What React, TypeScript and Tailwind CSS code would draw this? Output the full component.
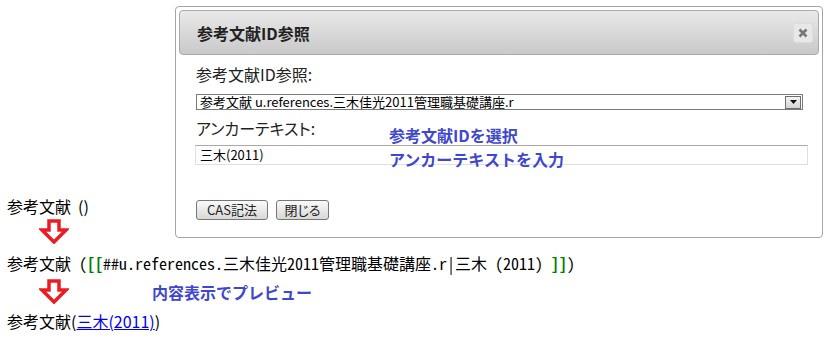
import React from "react";

const sans = "font-['Noto_Sans_CJK_JP',sans-serif]";
const palt = "[font-feature-settings:'palt']";
const mono = "font-['Noto_Sans_Mono_CJK_JP','Liberation_Mono',monospace]";

function DownArrow() {
  return (
    <svg width="30" height="25" viewBox="0 0 30 25" className="block">
      <path
        d="M10 2 H20 V11 H27 L15 23 L3 11 H10 Z"
        fill="#fff"
        stroke="#ed1c24"
        strokeWidth="3.5"
        strokeLinejoin="miter"
      />
    </svg>
  );
}

function ReferenceDialog() {
  return (
    <div className="absolute left-[175px] top-[6px] w-[648px] h-[232px] border border-[#a6a6a6] rounded-[4px] bg-white p-[3px]">
      {/* タイトルバー */}
      <div className="h-[45px] flex items-center justify-between pl-[17px] pr-[5px] border border-[#aaaaaa] rounded-[4px] bg-gradient-to-b from-[#e9e9e9] to-[#c9c9c9]">
        <span className="text-[16px] font-bold text-[#222]">参考文献ID参照</span>
        <button className="w-[20px] h-[20px] flex items-center justify-center rounded-[3px] border border-[#dcdcdc] bg-[#e8e8e8]">
          <svg width="10" height="10" viewBox="0 0 10 10">
            <path d="M1.5 1.5 L8.5 8.5 M8.5 1.5 L1.5 8.5" stroke="#777" strokeWidth="2.6" />
          </svg>
        </button>
      </div>

      <div className={`pl-[17px] pt-[9px] text-[#222] ${palt}`}>
        <div className="text-[16px] leading-[20px]">参考文献ID参照:</div>
        <div className="mt-[10px] w-[607px] h-[16px] border border-[#7a7a7a] flex items-center justify-between pl-[3px] pr-[1px]">
          <span className="text-[13px] leading-[14px] text-black">
            参考文献 u.references.三木佳光2011管理職基礎講座.r
          </span>
          <span className="w-[16px] h-[13px] flex items-center justify-center border border-[#6e6e6e] bg-gradient-to-b from-[#f4f4f4] to-[#d4d4d4]">
            <svg width="7" height="4" viewBox="0 0 7 4">
              <path d="M0 0 H7 L3.5 4 Z" fill="#111" />
            </svg>
          </span>
        </div>
        <div className="mt-[8px] text-[16px] leading-[20px]">アンカーテキスト:</div>
        <div className="mt-[7px] -ml-[1px] w-[613px] h-[20px] border border-[#e0e0e0] border-t-[#a9a9a9] flex items-center pl-[4px]">
          <span className="text-[13px] text-black">三木(2011)</span>
        </div>
        <div className="mt-[35px] flex gap-[8px]">
          <button className="w-[72px] h-[20px] text-[13px] leading-[18px] text-[#222] border border-[#777] rounded-[3px] bg-gradient-to-b from-[#fafafa] to-[#d8d8d8]">
            CAS記法
          </button>
          <button className="w-[53px] h-[20px] text-[13px] leading-[18px] text-[#222] border border-[#777] rounded-[3px] bg-gradient-to-b from-[#fafafa] to-[#d8d8d8]">
            閉じる
          </button>
        </div>
      </div>

      {/* 注釈 */}
      <span className="absolute left-[213px] top-[118px] text-[16px] leading-[20px] font-bold text-[#3f48cc]">
        参考文献IDを選択
      </span>
      <span className="absolute left-[213px] top-[142px] text-[16px] leading-[20px] font-bold text-[#3f48cc]">
        アンカーテキストを入力
      </span>
    </div>
  );
}

export default function App() {
  return (
    <div className={`relative w-[832px] h-[339px] bg-white text-black ${sans}`}>
      <ReferenceDialog />

      <div className="pt-[196px] pl-[7px]">
        <div className="text-[16px] leading-[20px]">
          参考文献<span className="ml-[7px]">()</span>
        </div>
        <div className="mt-[3px] ml-[32px]">
          <DownArrow />
        </div>
        <div className={`mt-[9px] text-[16px] leading-[20px] whitespace-pre ${mono}`}>
          参考文献 (<span className="text-[#008000] font-bold">[[</span>##u.references.三木佳光2011管理職基礎講座.r|三木 (2011) <span className="text-[#008000] font-bold">]]</span>)
        </div>
        <div className="mt-[6px] flex items-center">
          <div className="ml-[32px]">
            <DownArrow />
          </div>
          <span className="ml-[83px] text-[16px] font-bold text-[#3f48cc]">内容表示でプレビュー</span>
        </div>
        <div className={`mt-[7px] text-[16px] leading-[20px] ${palt}`}>
          参考文献(<a href="#" className="text-[#0000ee] underline">三木(2011)</a>)
        </div>
      </div>
    </div>
  );
}
